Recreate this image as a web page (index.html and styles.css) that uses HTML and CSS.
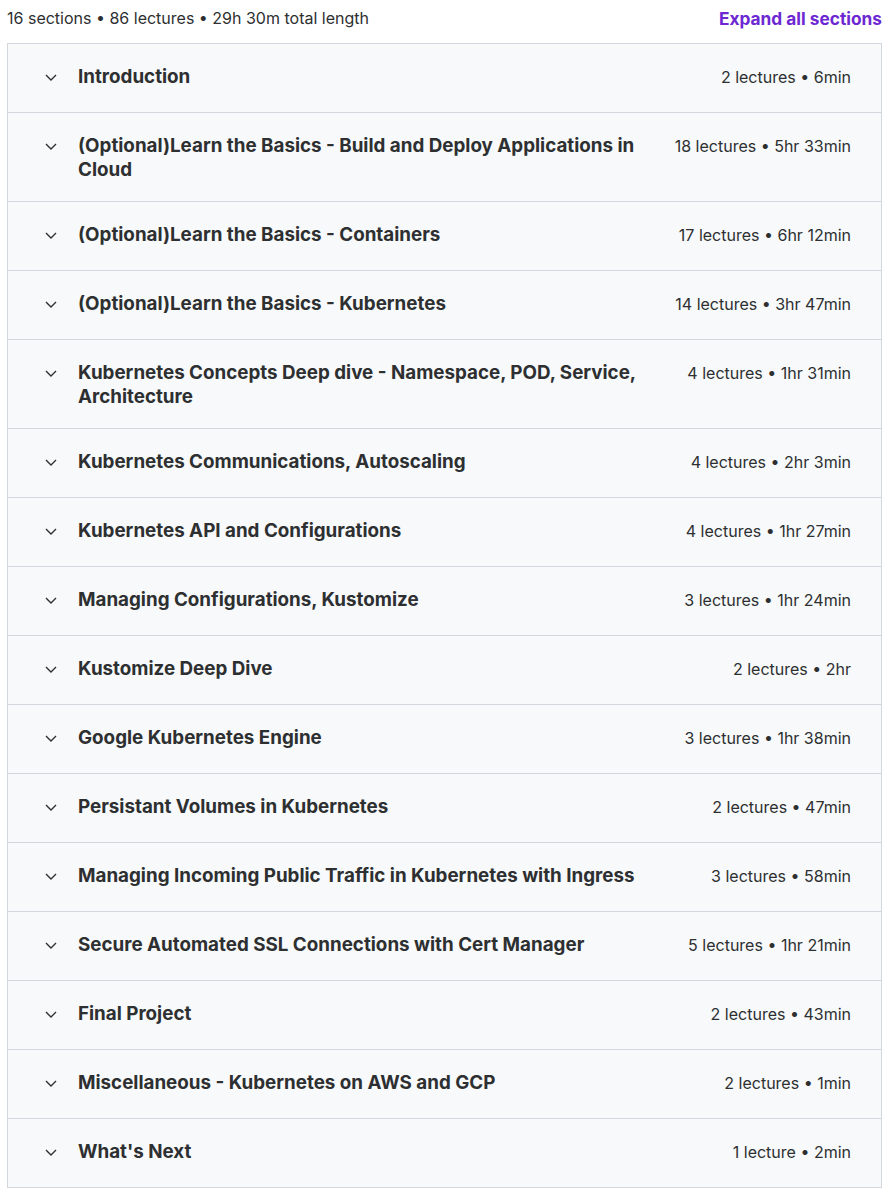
FILE: index.html
```html
<!DOCTYPE html>
<html lang="en">
<head>
<meta charset="utf-8">
<title>Course content</title>
<link rel="stylesheet" href="styles.css">
</head>
<body>
<div class="page">
  <div class="summary">
    <span class="summary-text">16 sections • 86 lectures • 29h 30m total length</span>
    <button class="expand">Expand all sections</button>
  </div>
  <div class="accordion">
    <div class="row"><span class="chev"><svg viewBox="0 0 12 7" width="12" height="7"><path d="M1 1l5 5 5-5" fill="none" stroke="#2d2f31" stroke-width="1.4"/></svg></span><span class="title">Introduction</span><span class="meta">2 lectures • 6min</span></div>
    <div class="row"><span class="chev"><svg viewBox="0 0 12 7" width="12" height="7"><path d="M1 1l5 5 5-5" fill="none" stroke="#2d2f31" stroke-width="1.4"/></svg></span><span class="title">(Optional)Learn the Basics - Build and Deploy Applications in Cloud</span><span class="meta">18 lectures • 5hr 33min</span></div>
    <div class="row"><span class="chev"><svg viewBox="0 0 12 7" width="12" height="7"><path d="M1 1l5 5 5-5" fill="none" stroke="#2d2f31" stroke-width="1.4"/></svg></span><span class="title">(Optional)Learn the Basics - Containers</span><span class="meta">17 lectures • 6hr 12min</span></div>
    <div class="row"><span class="chev"><svg viewBox="0 0 12 7" width="12" height="7"><path d="M1 1l5 5 5-5" fill="none" stroke="#2d2f31" stroke-width="1.4"/></svg></span><span class="title">(Optional)Learn the Basics - Kubernetes</span><span class="meta">14 lectures • 3hr 47min</span></div>
    <div class="row"><span class="chev"><svg viewBox="0 0 12 7" width="12" height="7"><path d="M1 1l5 5 5-5" fill="none" stroke="#2d2f31" stroke-width="1.4"/></svg></span><span class="title">Kubernetes Concepts Deep dive - Namespace, POD, Service, Architecture</span><span class="meta">4 lectures • 1hr 31min</span></div>
    <div class="row"><span class="chev"><svg viewBox="0 0 12 7" width="12" height="7"><path d="M1 1l5 5 5-5" fill="none" stroke="#2d2f31" stroke-width="1.4"/></svg></span><span class="title">Kubernetes Communications, Autoscaling</span><span class="meta">4 lectures • 2hr 3min</span></div>
    <div class="row"><span class="chev"><svg viewBox="0 0 12 7" width="12" height="7"><path d="M1 1l5 5 5-5" fill="none" stroke="#2d2f31" stroke-width="1.4"/></svg></span><span class="title">Kubernetes API and Configurations</span><span class="meta">4 lectures • 1hr 27min</span></div>
    <div class="row"><span class="chev"><svg viewBox="0 0 12 7" width="12" height="7"><path d="M1 1l5 5 5-5" fill="none" stroke="#2d2f31" stroke-width="1.4"/></svg></span><span class="title">Managing Configurations, Kustomize</span><span class="meta">3 lectures • 1hr 24min</span></div>
    <div class="row"><span class="chev"><svg viewBox="0 0 12 7" width="12" height="7"><path d="M1 1l5 5 5-5" fill="none" stroke="#2d2f31" stroke-width="1.4"/></svg></span><span class="title">Kustomize Deep Dive</span><span class="meta">2 lectures • 2hr</span></div>
    <div class="row"><span class="chev"><svg viewBox="0 0 12 7" width="12" height="7"><path d="M1 1l5 5 5-5" fill="none" stroke="#2d2f31" stroke-width="1.4"/></svg></span><span class="title">Google Kubernetes Engine</span><span class="meta">3 lectures • 1hr 38min</span></div>
    <div class="row"><span class="chev"><svg viewBox="0 0 12 7" width="12" height="7"><path d="M1 1l5 5 5-5" fill="none" stroke="#2d2f31" stroke-width="1.4"/></svg></span><span class="title">Persistant Volumes in Kubernetes</span><span class="meta">2 lectures • 47min</span></div>
    <div class="row"><span class="chev"><svg viewBox="0 0 12 7" width="12" height="7"><path d="M1 1l5 5 5-5" fill="none" stroke="#2d2f31" stroke-width="1.4"/></svg></span><span class="title">Managing Incoming Public Traffic in Kubernetes with Ingress</span><span class="meta">3 lectures • 58min</span></div>
    <div class="row"><span class="chev"><svg viewBox="0 0 12 7" width="12" height="7"><path d="M1 1l5 5 5-5" fill="none" stroke="#2d2f31" stroke-width="1.4"/></svg></span><span class="title">Secure Automated SSL Connections with Cert Manager</span><span class="meta">5 lectures • 1hr 21min</span></div>
    <div class="row"><span class="chev"><svg viewBox="0 0 12 7" width="12" height="7"><path d="M1 1l5 5 5-5" fill="none" stroke="#2d2f31" stroke-width="1.4"/></svg></span><span class="title">Final Project</span><span class="meta">2 lectures • 43min</span></div>
    <div class="row"><span class="chev"><svg viewBox="0 0 12 7" width="12" height="7"><path d="M1 1l5 5 5-5" fill="none" stroke="#2d2f31" stroke-width="1.4"/></svg></span><span class="title">Miscellaneous - Kubernetes on AWS and GCP</span><span class="meta">2 lectures • 1min</span></div>
    <div class="row"><span class="chev"><svg viewBox="0 0 12 7" width="12" height="7"><path d="M1 1l5 5 5-5" fill="none" stroke="#2d2f31" stroke-width="1.4"/></svg></span><span class="title">What's Next</span><span class="meta">1 lecture • 2min</span></div>
  </div>
</div>
</body>
</html>
```
FILE: styles.css
```css
* { box-sizing: border-box; }
html, body { margin: 0; padding: 0; background: #ffffff; }
body { font-family: Inter, "Noto Sans", sans-serif; color: #2d2f31; }
.page { padding: 6px 6px 0 7px; width: 888px; }
.summary {
  display: flex;
  justify-content: space-between;
  align-items: center;
  height: 24px;
  margin-bottom: 13px;
}
.summary-text { font-size: 16px; color: #2d2f31; }
.expand {
  background: none;
  border: 0;
  padding: 0;
  font-family: inherit;
  font-size: 17.3px;
  font-weight: 700;
  color: #6d28d2;
  cursor: pointer;
}
.accordion {
  border: 1px solid #d1d7dc;
  border-bottom: 0;
  width: 875px;
}
.row {
  display: flex;
  align-items: flex-start;
  background: #f7f9fa;
  border-bottom: 1px solid #d1d7dc;
  padding: 21px 30px 19px 36px;
  min-height: 69px;
}
.chev {
  flex: 0 0 14px;
  height: 24px;
  display: flex;
  align-items: center;
  justify-content: center;
  margin-right: 20px;
}
.chev svg { display: block; }
.title {
  flex: 1 1 auto;
  font-size: 18.8px;
  line-height: 24px;
  font-weight: 700;
  color: #2d2f31;
}
.meta {
  flex: 0 0 auto;
  margin-left: 36px;
  white-space: nowrap;
  font-size: 16px;
  line-height: 24px;
  color: #2d2f31;
}
```
